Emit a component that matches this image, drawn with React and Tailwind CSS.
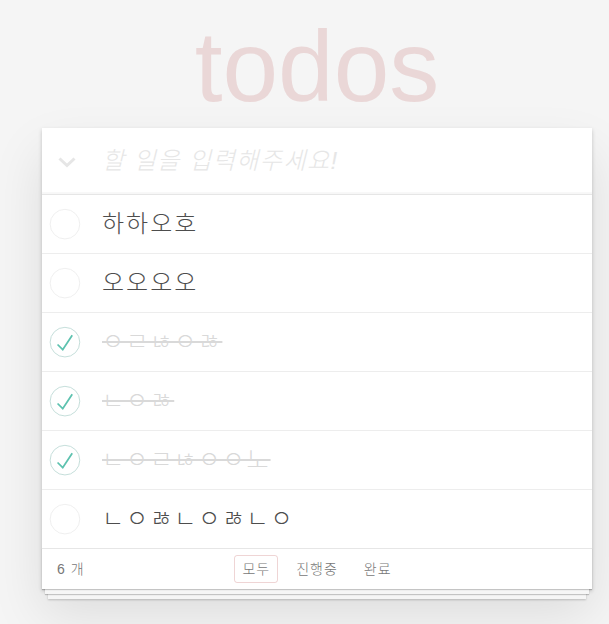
import React from "react";

const todos = [
  { text: "하하오호", done: false },
  { text: "오오오오", done: false },
  { text: "ㅇㄹㄶㅇㅀ", done: true },
  { text: "ㄴㅇㅀ", done: true },
  { text: "ㄴㅇㄹㄶㅇㅇ노", done: true },
  { text: "ㄴㅇㅀㄴㅇㅀㄴㅇ", done: false },
];

function Toggle({ done }) {
  return (
    <svg width="40" height="40" viewBox="-10 -18 100 135" className="shrink-0">
      <circle cx="50" cy="50" r="50" fill="none" stroke={done ? "#bddad5" : "#ededed"} strokeWidth="3" />
      {done && <path d="M72 25L42 71 27 56l-4 4 20 20 34-52z" fill="#5dc2af" />}
    </svg>
  );
}

export default function App() {
  return (
    <div className="min-h-screen bg-[#f5f5f5] pt-[16px] font-light [font-family:'Liberation_Sans','Noto_Sans_CJK_KR',sans-serif]">
      <div className="ml-[42px] w-[550px]">
        <h1 className="h-[100px] mb-[12px] text-center text-[100px] leading-none font-thin text-[rgba(175,47,47,0.15)]">
          todos
        </h1>
        <section className="bg-white shadow-[0_2px_4px_0_rgba(0,0,0,0.2),0_25px_50px_0_rgba(0,0,0,0.1)]">
          <header className="flex items-center h-[66px] shadow-[inset_0_-2px_1px_rgba(0,0,0,0.03)]">
            <div className="w-[60px] shrink-0 flex">
              <svg width="18" height="11" viewBox="0 0 18 11" className="ml-[16px] mt-[3px]">
                <polyline points="1.5,1.5 9,8.5 16.5,1.5" fill="none" stroke="#e6e6e6" strokeWidth="3" />
              </svg>
            </div>
            <input
              readOnly
              placeholder="할 일을 입력해주세요!"
              className="flex-1 bg-transparent outline-none text-[24px] tracking-[1.5px] text-[#4d4d4d] placeholder:italic placeholder:font-light placeholder:text-[#e6e6e6]"
            />
          </header>
          <ul className="border-t border-[#e6e6e6]">
            {todos.map((t, i) => (
              <li key={i} className="flex items-center h-[59px] border-b border-[#ededed] last:border-b-0 last:h-[58px]">
                <Toggle done={t.done} />
                <span
                  className={
                    "ml-[20px] text-[24px] leading-[1.2] tracking-[2px] " +
                    (t.done ? "text-[#d9d9d9] line-through" : "text-[#4d4d4d]")
                  }
                >
                  {t.text}
                </span>
              </li>
            ))}
          </ul>
          <footer className="grid grid-cols-[1fr_auto_1fr] items-center h-[41px] px-[15px] border-t border-[#e6e6e6] text-[14px] text-[#777] shadow-[0_1px_1px_rgba(0,0,0,0.2),0_8px_0_-3px_#f6f6f6,0_9px_1px_-3px_rgba(0,0,0,0.2),0_16px_0_-6px_#f6f6f6,0_17px_2px_-6px_rgba(0,0,0,0.2)]">
            <span className="tracking-[1px]">6 개</span>
            <div className="flex items-center gap-[10px] tracking-[1px]">
              <span className="px-[7px] py-[3px] rounded-[3px] border border-[rgba(175,47,47,0.2)] leading-[20px]">모두</span>
              <span className="px-[7px] py-[3px] rounded-[3px] border border-transparent leading-[20px]">진행중</span>
              <span className="px-[7px] py-[3px] rounded-[3px] border border-transparent leading-[20px]">완료</span>
            </div>
            <span />
          </footer>
        </section>
      </div>
    </div>
  );
}
